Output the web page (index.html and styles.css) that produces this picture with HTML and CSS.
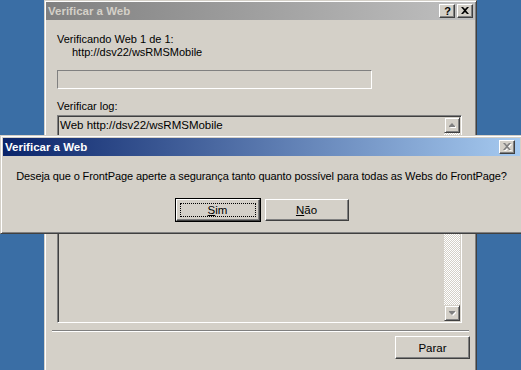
FILE: index.html
```html
<!DOCTYPE html>
<html lang="pt">
<head>
    <meta charset="UTF-8">
    <title>Verificar a Web</title>
    <link rel="stylesheet" href="styles.css">
</head>
<body>

    <div class="window back">
        <div class="titlebar inactive">
            <span class="title">Verificar a Web</span>
            <div class="caption-buttons">
                <div class="cap-btn help">?</div>
                <div class="cap-btn">
                    <svg width="8" height="7" viewBox="0 0 8 7"><path d="M0 0h2l2 2 2-2h2L5 3.5 8 7H6L4 5 2 7H0l3-3.5z" fill="#000"/></svg>
                </div>
            </div>
        </div>
        <div class="body">
            <div class="line">Verificando Web 1 de 1:</div>
            <div class="line indent">http://dsv22/wsRMSMobile</div>
            <div class="progress"></div>
            <div class="line label">Verificar log:</div>
            <div class="log">
                <div class="log-text">
                    <div>Web http://dsv22/wsRMSMobile</div>
                    <div>Iniciando verificação em 22/1/2006 14:31:54</div>
                </div>
                <div class="scrollbar">
                    <div class="scroll-btn">
                        <svg width="7" height="5" viewBox="0 0 7 5"><path d="M4 1l3 3v1H1z" fill="#fff"/><path d="M3 0l3 3v1H0V3z" fill="#808080"/></svg>
                    </div>
                    <div class="track"></div>
                    <div class="scroll-btn">
                        <svg width="7" height="5" viewBox="0 0 7 5"><path d="M1 1h6v1L4 5z" fill="#fff"/><path d="M0 0h6v1L3 4 0 1z" fill="#808080"/></svg>
                    </div>
                </div>
            </div>
            <div class="separator"></div>
            <div class="footer">
                <button class="btn">Parar</button>
            </div>
        </div>
    </div>

    <div class="window front">
        <div class="titlebar active">
            <span class="title">Verificar a Web</span>
            <div class="caption-buttons">
                <div class="cap-btn">
                    <svg width="9" height="8" viewBox="0 0 9 8"><path d="M1 1h2l2 2 2-2h2L6 4.5 9 8H7L5 6 3 8H1l3-3.5z" fill="#fff"/><path d="M0 0h2l2 2 2-2h2L5 3.5 8 7H6L4 5 2 7H0l3-3.5z" fill="#808080"/></svg>
                </div>
            </div>
        </div>
        <div class="message">Deseja que o FrontPage aperte a segurança tanto quanto possível para todas as Webs do FrontPage?</div>
        <div class="actions">
            <div class="default-frame">
                <button class="btn wide focused"><span><u>S</u>im</span></button>
            </div>
            <button class="btn wide"><u>N</u>ão</button>
        </div>
    </div>

</body>
</html>
```

FILE: styles.css
```css
* {
    margin: 0; padding: 0;
    box-sizing: border-box;
}
body {
    background: #3a6ea5;
    width: 521px;
    height: 370px;
    overflow: hidden;
    position: relative;
    font-family: 'Liberation Sans', Arial, sans-serif;
    font-size: 11px;
    color: #000;
}
.window {
    position: absolute;
    background: #d4d0c8;
    border: 1px solid;
    border-color: #d4d0c8 #404040 #404040 #d4d0c8;
    box-shadow: inset 1px 1px #fff, inset -1px -1px #808080;
    padding: 1px 1px 0 1px;
    display: flex;
    flex-direction: column;
}
.back {
    left: 44px; top: 0;
    width: 433px; height: 372px;
}
.front {
    left: 0; top: 135px;
    width: 523px; height: 99px;
    padding: 2px;
}
.titlebar {
    height: 18px;
    display: flex;
    align-items: center;
    padding-left: 2px;
    flex-shrink: 0;
}
.title {
    font-family: 'Liberation Sans', Arial, sans-serif;
    font-weight: bold;
    font-size: 11.5px;
    flex: 1;
}
.inactive {
    background: linear-gradient(to right, #808080, #c0c0c0);
    color: #d4d0c8;
}
.active {
    background: linear-gradient(to right, #0a246a, #a6caf0);
    color: #fff;
}
.caption-buttons {
    display: flex;
    gap: 2px;
    margin-right: 2px;
}
.front .caption-buttons { margin-right: 5px; }
.cap-btn {
    width: 16px; height: 14px;
    background: #d4d0c8;
    border: 1px solid;
    border-color: #fff #404040 #404040 #fff;
    box-shadow: inset -1px -1px #808080;
    display: flex;
    align-items: center;
    justify-content: center;
    padding-bottom: 1px;
}
.help {
    color: #000;
    font-weight: bold;
    font-size: 11px;
    line-height: 12px;
    padding: 0 0 0 1px;
}
.body {
    padding: 13px 11px 0 11px;
    display: flex;
    flex-direction: column;
}
.line { line-height: 13px; }
.indent { padding-left: 15px; }
.progress {
    width: 315px; height: 19px;
    margin-top: 11px;
    border: 1px solid;
    border-color: #808080 #fff #fff #808080;
}
.label { margin-top: 11px; }
.log {
    width: 405px; height: 208px;
    margin-top: 2px;
    border: 1px solid;
    border-color: #808080 #fff #fff #808080;
    box-shadow: inset 1px 1px #404040, inset -1px -1px #d4d0c8;
    padding: 1px;
    display: flex;
    overflow: hidden;
}
.log-text {
    flex: 1;
    padding: 1px 0 0 1px;
    font-size: 11.5px;
    line-height: 14px;
    overflow: hidden;
    white-space: nowrap;
}
.scrollbar {
    width: 16px;
    display: flex;
    flex-direction: column;
}
.scroll-btn {
    width: 16px; height: 16px;
    background: #d4d0c8;
    border: 1px solid;
    border-color: #d4d0c8 #404040 #404040 #d4d0c8;
    box-shadow: inset 1px 1px #fff, inset -1px -1px #808080;
    display: flex;
    align-items: center;
    justify-content: center;
}
.track {
    flex: 1;
    background: repeating-conic-gradient(#fff 0 25%, #d4d0c8 0 50%) 0 0 / 2px 2px;
}
.separator {
    margin: 7px -5px 0 -5px;
    height: 2px;
    border-top: 1px solid #808080;
    border-bottom: 1px solid #fff;
}
.footer {
    display: flex;
    justify-content: flex-end;
    margin-top: 4px;
    margin-right: -6px;
}
.btn {
    width: 75px; height: 23px;
    background: #d4d0c8;
    border: 1px solid;
    border-color: #fff #404040 #404040 #fff;
    box-shadow: inset -1px -1px #808080;
    font-family: 'Liberation Sans', Arial, sans-serif;
    font-size: 11.5px;
    color: #000;
}
.message {
    text-align: center;
    margin-top: 14px;
    line-height: 13px;
    letter-spacing: -0.11px;
}
.actions {
    display: flex;
    justify-content: center;
    align-items: center;
    gap: 4px;
    margin-top: 15px;
}
.default-frame {
    border: 1px solid #000;
}
.wide { width: 84px; height: 22px; }
.focused {
    display: flex;
    align-items: center;
    justify-content: center;
    padding: 3px;
}
.focused span {
    flex: 1;
    align-self: stretch;
    border: 1px dotted #000;
    display: flex;
    align-items: center;
    justify-content: center;
}
```
